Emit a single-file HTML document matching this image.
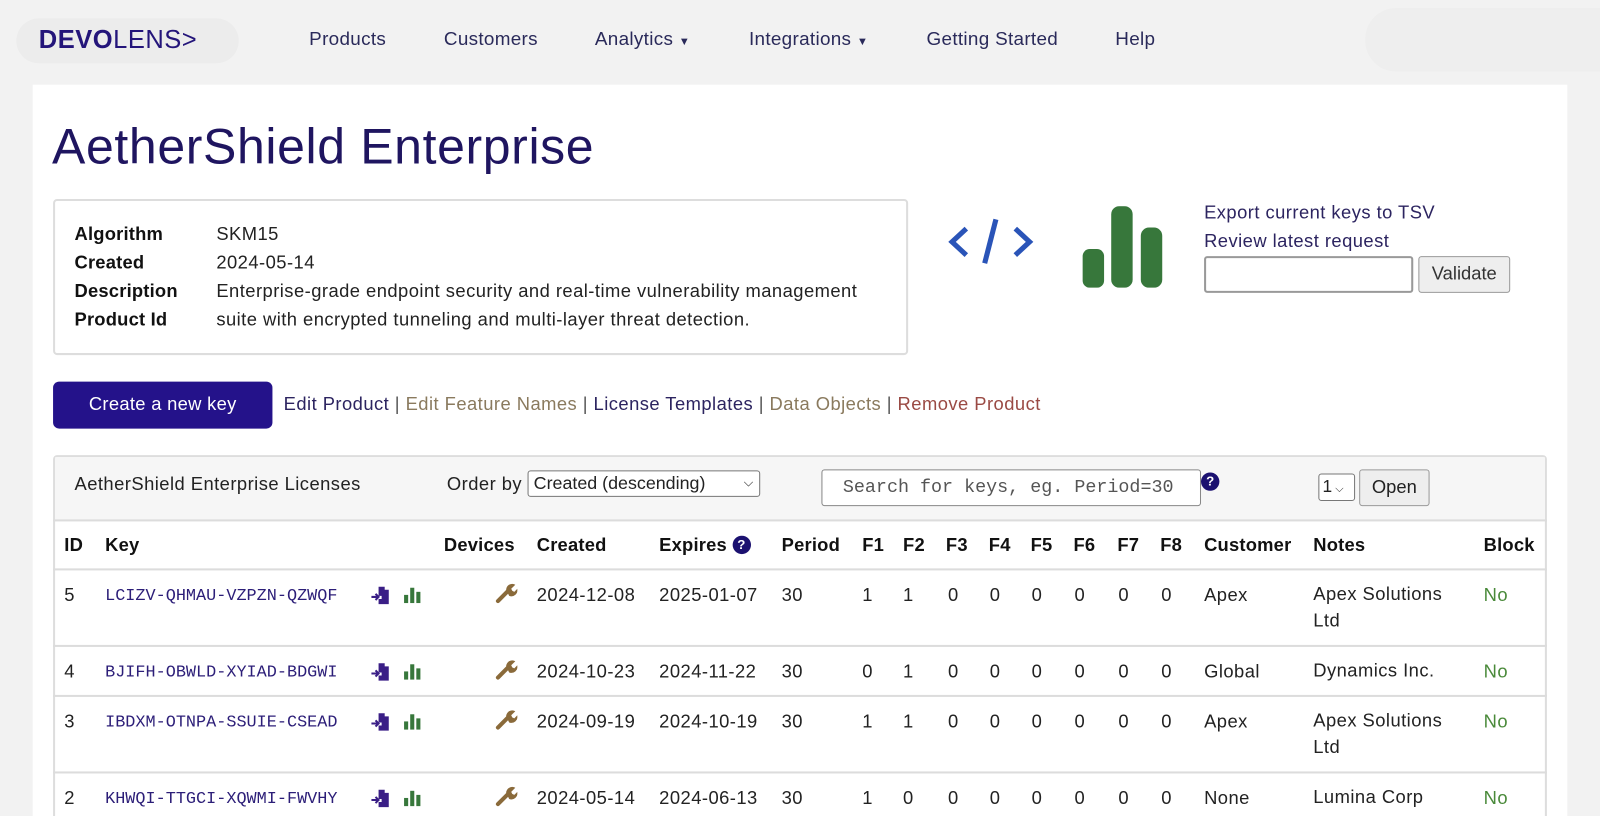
<!DOCTYPE html>
<html style="width:1600px;height:816px;overflow:hidden"><head><meta charset="utf-8"><style>
*{margin:0;padding:0;box-sizing:border-box}
body{width:1600px;height:816px;overflow:hidden;background:#f2f2f2;font-family:"Liberation Sans",sans-serif;color:#222;position:relative}
#w{position:absolute;left:0;top:0;width:1568px;height:800px;overflow:hidden;transform:scale(1.0204);transform-origin:0 0}
.a{position:absolute;white-space:nowrap}
.nav{font-size:18.5px;color:#2a2a5a;top:27px;letter-spacing:0.3px}
.card{position:absolute;left:32px;top:83px;width:1504px;height:717px;background:#fff}
.t{font-size:18px;color:#222;letter-spacing:0.45px}
.h{font-weight:bold;font-size:18px;color:#111;letter-spacing:0.2px}
.k{font-family:"Liberation Mono",monospace;font-size:16.5px;color:#2c1e78}
.hl{position:absolute;left:52px;width:1464px;height:2px;background:#dcdcdc}
</style></head><body><div id="w">
<div class="a" style="left:16px;top:18px;width:218px;height:44px;border-radius:22px;background:#ececec"></div>
<div class="a" style="left:1338px;top:8px;width:262px;height:62px;border-radius:30px;background:#eeeeee"></div>
<div class="a" style="left:38px;top:25px;font-size:25px;color:#24157a;letter-spacing:0.5px"><b style="font-weight:900">DEVO</b><span style="font-weight:300">LENS&gt;</span></div>
<div class="a nav" style="left:303px">Products</div>
<div class="a nav" style="left:435px">Customers</div>
<div class="a nav" style="left:583px">Analytics <span style="font-size:11px">▼</span></div>
<div class="a nav" style="left:734px">Integrations <span style="font-size:11px">▼</span></div>
<div class="a nav" style="left:908px">Getting Started</div>
<div class="a nav" style="left:1093px">Help</div>
<div class="card"></div>
<div class="a" style="left:51px;top:116px;font-size:49px;color:#1f1560;letter-spacing:0.6px">AetherShield Enterprise</div>
<div class="a" style="left:52px;top:195px;width:838px;height:153px;border:2px solid #ddd;border-radius:4px"></div>
<div class="a h" style="left:73px;top:219px">Algorithm</div>
<div class="a h" style="left:73px;top:247px">Created</div>
<div class="a h" style="left:73px;top:275px">Description</div>
<div class="a h" style="left:73px;top:303px">Product Id</div>
<div class="a t" style="left:212px;top:219px">SKM15</div>
<div class="a t" style="left:212px;top:247px">2024-05-14</div>
<div class="a t" style="left:212px;top:275px">Enterprise-grade endpoint security and real-time vulnerability management</div>
<div class="a t" style="left:212px;top:303px">suite with encrypted tunneling and multi-layer threat detection.</div>
<svg class="a" style="left:925px;top:212px" width="92" height="50"><g fill="none" stroke="#2a54b8" stroke-width="5"><path d="M22 12 L8 25 L22 38"/><path d="M70 12 L84 25 L70 38"/><path d="M51 3 L40 46"/></g></svg>
<svg class="a" style="left:1060px;top:202px" width="82" height="80"><g fill="#37773b"><rect x="1" y="42" width="21" height="38" rx="7"/><rect x="29" y="0" width="21" height="80" rx="8"/><rect x="58" y="21" width="21" height="59" rx="8"/></g></svg>
<div class="a t" style="left:1180px;top:198px;color:#2c2460">Export current keys to TSV</div>
<div class="a t" style="left:1180px;top:226px;color:#2c2460">Review latest request</div>
<div class="a" style="left:1180px;top:251px;width:205px;height:36px;border:2px solid #999;border-radius:3px;background:#fff"></div>
<div class="a" style="left:1390px;top:251px;width:90px;height:36px;border:1.5px solid #999;border-radius:3px;background:#eee;font-size:18px;color:#333;text-align:center;line-height:33px">Validate</div>
<div class="a" style="left:52px;top:374px;width:215px;height:46px;background:#24128a;border-radius:6px;color:#fff;font-size:18px;text-align:center;line-height:45px;letter-spacing:0.3px">Create a new key</div>
<div class="a t" style="left:278px;top:386px;color:#555"><span style="color:#2c2460">Edit Product</span> | <span style="color:#8a7a5e">Edit Feature Names</span> | <span style="color:#2c2460">License Templates</span> | <span style="color:#8a7a5e">Data Objects</span> | <span style="color:#9a4a44">Remove Product</span></div>
<div class="a" style="left:52px;top:446px;width:1464px;height:400px;border:2px solid #ddd;border-radius:4px"></div>
<div class="a" style="left:54px;top:448px;width:1460px;height:62px;background:#f6f6f6"></div>
<div class="a t" style="left:73px;top:464px">AetherShield Enterprise Licenses</div>
<div class="a t" style="left:438px;top:464px">Order by</div>
<div class="a" style="left:517px;top:461px;width:228px;height:26px;border:1.5px solid #777;border-radius:3px;background:#fff;font-size:17.5px;padding-left:5px;line-height:23px">Created (descending) <span style="float:right;padding-right:6px;font-size:12px">⌵</span></div>
<div class="a" style="left:805px;top:460px;width:372px;height:36px;border:1.5px solid #888;border-radius:3px;background:#fff;font-family:'Liberation Mono',monospace;font-size:18px;color:#555;padding-left:20px;line-height:34px;overflow:hidden">Search for keys, eg. Period=30</div>
<div class="a" style="left:1177px;top:463px;width:18px;height:18px;border-radius:50%;background:#1b1170;color:#fff;font-size:13px;font-weight:bold;text-align:center;line-height:18px">?</div>
<div class="a" style="left:1292px;top:464px;width:36px;height:27px;border:1.5px solid #777;border-radius:3px;background:#fff;font-size:17px;padding-left:3px;line-height:24px">1<span style="font-size:11px"> ⌵</span></div>
<div class="a" style="left:1332px;top:460px;width:69px;height:36px;border:1.5px solid #999;border-radius:3px;background:#eee;font-size:18px;text-align:center;line-height:33px">Open</div>
<div class="hl" style="top:509px"></div>
<div class="a h" style="left:63px;top:524px">ID</div><div class="a h" style="left:103px;top:524px">Key</div><div class="a h" style="left:435px;top:524px">Devices</div><div class="a h" style="left:526px;top:524px">Created</div><div class="a h" style="left:646px;top:524px">Expires <span style="display:inline-block;width:18px;height:18px;border-radius:50%;background:#1b1170;color:#fff;font-size:13px;text-align:center;line-height:18px;vertical-align:2px">?</span></div><div class="a h" style="left:766px;top:524px">Period</div>
<div class="a h" style="left:845px;top:524px">F1</div><div class="a h" style="left:885px;top:524px">F2</div><div class="a h" style="left:927px;top:524px">F3</div><div class="a h" style="left:969px;top:524px">F4</div><div class="a h" style="left:1010px;top:524px">F5</div><div class="a h" style="left:1052px;top:524px">F6</div><div class="a h" style="left:1095px;top:524px">F7</div><div class="a h" style="left:1137px;top:524px">F8</div><div class="a h" style="left:1180px;top:524px">Customer</div><div class="a h" style="left:1287px;top:524px">Notes</div><div class="a h" style="left:1454px;top:524px">Block</div>
<div class="hl" style="top:557px"></div><div class="hl" style="top:632px"></div><div class="hl" style="top:681px"></div><div class="hl" style="top:756px"></div>
<div id="rows"></div>
</div>
<script>
var R=[[573,"5","LCIZV-QHMAU-VZPZN-QZWQF","2024-12-08","2025-01-07",[1,1,0,0,0,0,0,0],"Apex","Apex Solutions","Ltd"],
[648,"4","BJIFH-OBWLD-XYIAD-BDGWI","2024-10-23","2024-11-22",[0,1,0,0,0,0,0,0],"Global","Dynamics Inc.",""],
[697,"3","IBDXM-OTNPA-SSUIE-CSEAD","2024-09-19","2024-10-19",[1,1,0,0,0,0,0,0],"Apex","Apex Solutions","Ltd"],
[772,"2","KHWQI-TTGCI-XQWMI-FWVHY","2024-05-14","2024-06-13",[1,0,0,0,0,0,0,0],"None","Lumina Corp",""]];
var F=[845,885,929,970,1011,1053,1096,1138],h="";
R.forEach(function(r){var y=r[0];
h+='<div class="a t" style="left:63px;top:'+y+'px">'+r[1]+'</div><div class="a k" style="left:103px;top:'+(y+1)+'px">'+r[2]+'</div>';
h+='<svg class="a" style="left:363px;top:'+(y)+'px" width="56" height="20"><path d="M8 2h6v3h4v14H8v-5h3v-3H8z" fill="#3a1e86"/><path d="M1 12h7M5 9l3 3-3 3" stroke="#3a1e86" stroke-width="2" fill="none"/><g fill="#37773b"><rect x="33" y="10" width="4" height="8"/><rect x="39" y="3" width="4" height="15"/><rect x="45" y="7" width="4" height="11"/></g></svg>';
h+='<svg class="a" style="left:485px;top:'+(y-3)+'px" width="22" height="22"><path d="M3 19L12 10" stroke="#8a6a3a" stroke-width="4" stroke-linecap="round"/><path d="M11 8a6 6 0 0 1 9-5l-4 4 1 2 2 1 3-3a6 6 0 0 1-8 7z" fill="#8a6a3a"/></svg>';
h+='<div class="a t" style="left:526px;top:'+y+'px">'+r[3]+'</div><div class="a t" style="left:646px;top:'+y+'px">'+r[4]+'</div><div class="a t" style="left:766px;top:'+y+'px">30</div>';
r[5].forEach(function(v,i){h+='<div class="a t" style="left:'+F[i]+'px;top:'+y+'px">'+v+'</div>'});
h+='<div class="a t" style="left:1180px;top:'+y+'px">'+r[6]+'</div><div class="a t" style="left:1287px;top:'+y+'px;line-height:26px;margin-top:-4px">'+r[7]+'<br>'+r[8]+'</div><div class="a t" style="left:1454px;top:'+y+'px;color:#4a8a3a">No</div>';});
document.getElementById("w").insertAdjacentHTML("beforeend",h);
</script>
</body></html>
